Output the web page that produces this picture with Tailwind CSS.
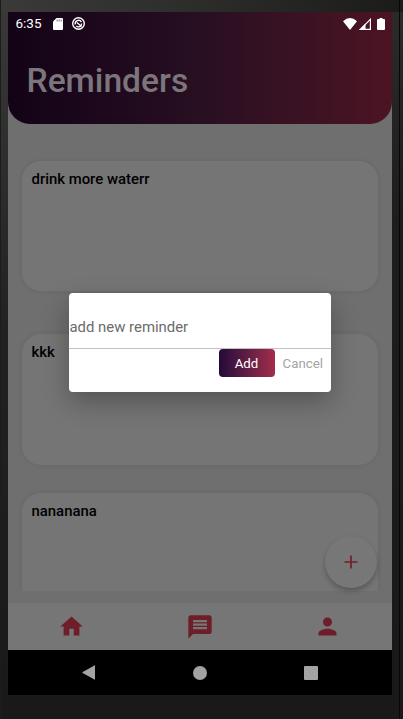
<!DOCTYPE html>
<html lang="en">
<head>
<meta charset="utf-8">
<meta name="viewport" content="width=device-width, initial-scale=1">
<title>Reminders</title>
<script src="https://cdn.jsdelivr.net/npm/@tailwindcss/browser@4"></script>
</head>
<body class="font-[Roboto,sans-serif]">
<div class="relative w-[403px] h-[719px] overflow-hidden bg-linear-to-b from-[#2b2b2a] via-[#1d1d1d] via-30% to-[#191919] pt-3 pl-2">
  <!-- device bezel edges -->
  <div class="absolute left-0 top-0 w-2 h-full bg-linear-to-b from-[#393a38] via-[#222222] via-45% to-[#191919]"></div>
  <div class="absolute left-0 top-0 w-full h-3 bg-linear-to-r from-[#3a3b39] via-[#2c2d2b] via-50% to-[#1b1c1a]"></div>
  <div class="absolute left-0 top-0 w-px h-full bg-[#1c1c1c]"></div>
  <div class="absolute right-[3px] top-0 w-px h-full bg-[#080808]"></div>

  <div class="relative w-96 h-[683px] flex flex-col bg-[#6f6f6f]">
    <header class="h-28 shrink-0 rounded-b-[22px] bg-linear-to-r from-[#130317] via-[#280f22] via-50% to-[#4c1423]">
      <div class="flex h-[23px] items-center pl-[7.500px] pr-[7px] text-white">
        <span class="text-[13.500px] leading-none w-[37.500px]">6:35</span>
        <svg class="w-[10px] h-3 mr-[9px]" viewBox="0 0 10 12"><path fill="#fff" d="M3.500 0H9q1 0 1 1v10q0 1-1 1H1q-1 0-1-1V3.500z"/><path stroke="#1b0a1c" stroke-width=".6" d="M4.200 1.500v2M6.200 1.500v2M8.200 1.500v2"/></svg>
        <svg class="w-[13px] h-[13px]" viewBox="0 0 13 13" fill="none" stroke="#fff"><circle cx="6.500" cy="6.500" r="5.800" stroke-width="1.400"/><path stroke-width="1.300" d="M3.300 7.500A3.300 3.300 0 0 1 9.400 5.100M9.700 6.500A3.300 3.300 0 0 1 4.200 9M4.800 5.500l4.800 4"/></svg>
        <svg class="ml-auto w-[14px] h-3" viewBox="0 0 14 12"><path fill="#fff" d="M7 12 0 3.200Q7-3 14 3.200z"/></svg>
        <svg class="ml-[2px] w-3 h-3" viewBox="0 0 12 12"><path fill="none" stroke="#fff" stroke-width="1.200" d="M1.400 11.400 11.400 1.400v10z"/><path fill="#fff" d="M0 12 6.500 5.500V12z"/></svg>
        <svg class="ml-[6px] w-2 h-3" viewBox="0 0 8 12"><path fill="#fff" d="M2.500 0h3v1H7q1 0 1 1v9q0 1-1 1H1q-1 0-1-1V2q0-1 1-1h1.500z"/></svg>
      </div>
      <h1 class="pl-[18.500px] pt-[26px] text-[33.600px] leading-10 font-medium text-[#7b767b]">Reminders</h1>
    </header>

    <main class="h-[467px] shrink-0 pt-[37px] px-[14px] overflow-hidden text-[14.900px] leading-[18px] font-medium text-black">
      <section class="h-[130px] rounded-[19px] bg-[#757575] shadow-[0_0_4px_1px_rgba(0,0,0,0.06)] pl-[9.500px] pt-[9px]">drink more waterr</section>
      <section class="mt-[43px] h-[131px] rounded-[19px] bg-[#757575] shadow-[0_0_4px_1px_rgba(0,0,0,0.06)] pl-[9.500px] pt-[9px]">kkk</section>
      <section class="mt-7 h-[98px] rounded-t-[19px] bg-[#757575] shadow-[0_0_4px_1px_rgba(0,0,0,0.06)] pl-[9.500px] pt-[9px]">nananana</section>
    </main>
    <!-- lower edge of the scrolling list -->
    <div class="h-3 shrink-0 bg-[#6f6f6f]"></div>

    <nav class="grid grid-cols-3 h-[47px] shrink-0 place-items-center bg-[#767676] text-[#6d1e2a]">
      <svg class="w-[27px] h-[27px] mr-px" viewBox="0 0 24 24" fill="currentColor"><path d="M10 20v-6h4v6h5v-8h3L12 3 2 12h3v8z"/></svg>
      <svg class="w-[28px] h-[28px]" viewBox="0 0 24 24" fill="currentColor"><path d="M20 2H4c-1.100 0-1.990.9-1.990 2L2 22l4-4h14c1.100 0 2-.9 2-2V4c0-1.100-.9-2-2-2zm-2 12H6v-2h12v2zm0-3H6V9h12v2zm0-3H6V6h12v2z"/></svg>
      <svg class="w-[27px] h-[27px] mr-px" viewBox="0 0 24 24" fill="currentColor"><path d="M12 12c2.210 0 4-1.790 4-4s-1.790-4-4-4-4 1.790-4 4 1.790 4 4 4zm0 2c-2.670 0-8 1.340-8 4v2h16v-2c0-2.660-5.330-4-8-4z"/></svg>
    </nav>

    <footer class="grid grid-cols-[160px_64px_160px] grow items-center bg-black">
      <svg class="w-[13.500px] h-[15px] ml-[73.500px]" viewBox="0 0 14 16"><path fill="#a3a3a3" d="M13 .5q1-.5 1 .5v14q0 1-1 .5L.5 8.500q-.8-.5 0-1z"/></svg>
      <div class="w-[14px] h-[14px] rounded-full bg-[#a3a3a3] justify-self-center"></div>
      <div class="w-[14px] h-[14px] rounded-[1px] bg-[#a3a3a3] ml-[72px]"></div>
    </footer>
  </div>

  <!-- floating add button -->
  <div class="absolute left-[325px] top-[536px] size-[52px] rounded-full bg-[#777777] shadow-[0_3px_5px_rgba(0,0,0,0.25)] flex items-center justify-center">
    <svg class="w-[14px] h-[14px]" viewBox="0 0 14 14"><path stroke="#741f2a" stroke-width="1.700" d="M.5 7h13M7 .5v13"/></svg>
  </div>

  <!-- new reminder dialog -->
  <div class="absolute left-[69px] top-[293px] w-[262px] h-[99px] rounded-[4px] bg-white shadow-[0_10px_26px_rgba(0,0,0,0.28)] flex flex-col">
    <div class="h-[56px] shrink-0 border-b border-[#c2c2c2] pt-[24px] pl-[0.500px] text-[14.900px] leading-[20px] text-[#6b6b6b]">add new reminder</div>
    <div class="flex justify-end items-start pr-[8px] text-[13.300px] leading-[30px]">
      <div class="w-14 h-7 rounded-[4px] bg-linear-to-r from-[#250839] to-[#a52c49] text-center text-white">Add</div>
      <div class="ml-2 text-[#a4a4a4]">Cancel</div>
    </div>
  </div>
</div>
</body>
</html>
